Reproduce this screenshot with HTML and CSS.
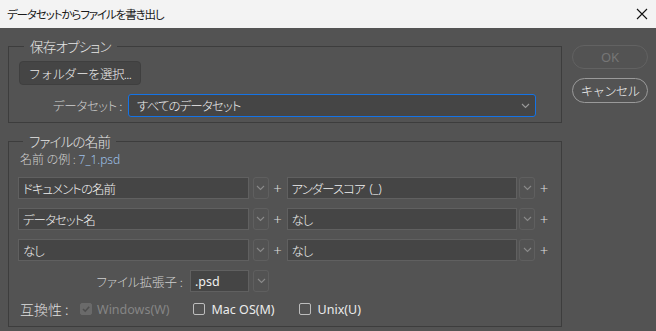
FILE: index.html
```html
<!DOCTYPE html>
<html lang="ja">
<head>
    <meta charset="UTF-8">
    <title>データセットからファイルを書き出し</title>
    <link rel="stylesheet" href="styles.css">
</head>
<body>
    <div class="titlebar">
        <span class="title">データセットからファイルを書き出し</span>
        <svg class="close" width="12" height="12" viewBox="0 0 12 12"><path d="M1 1 L11 11 M11 1 L1 11" stroke="#111" stroke-width="1.1" fill="none"/></svg>
    </div>
    <div class="dialog">
        <div class="main">
            <fieldset class="group">
                <legend>保存オプション</legend>
                <button class="btn-folder">フォルダーを選択...</button>
                <div class="row dataset-row">
                    <span class="label dataset-label">データセット :</span>
                    <div class="select active">
                        <span>すべてのデータセット</span>
                        <svg class="chev" width="9" height="6" viewBox="0 0 9 6"><path d="M1 1 L4.5 4.5 L8 1" stroke="#9a9a9a" stroke-width="1.1" fill="none"/></svg>
                    </div>
                </div>
            </fieldset>

            <fieldset class="group names">
                <legend>ファイルの名前</legend>
                <div class="example">名前 の例 : <span class="example-value">7_1.psd</span></div>

                <div class="row name-row">
                    <div class="field">ドキュメントの名前</div>
                    <div class="chev-btn"><svg width="9" height="6" viewBox="0 0 9 6"><path d="M1 1 L4.5 4.5 L8 1" stroke="#8a8a8a" stroke-width="1.1" fill="none"/></svg></div>
                    <span class="plus">+</span>
                    <div class="field second">アンダースコア<span class="paren">(_)</span></div>
                    <div class="chev-btn"><svg width="9" height="6" viewBox="0 0 9 6"><path d="M1 1 L4.5 4.5 L8 1" stroke="#8a8a8a" stroke-width="1.1" fill="none"/></svg></div>
                    <span class="plus">+</span>
                </div>
                <div class="row name-row">
                    <div class="field">データセット名</div>
                    <div class="chev-btn"><svg width="9" height="6" viewBox="0 0 9 6"><path d="M1 1 L4.5 4.5 L8 1" stroke="#8a8a8a" stroke-width="1.1" fill="none"/></svg></div>
                    <span class="plus">+</span>
                    <div class="field second">なし</div>
                    <div class="chev-btn"><svg width="9" height="6" viewBox="0 0 9 6"><path d="M1 1 L4.5 4.5 L8 1" stroke="#8a8a8a" stroke-width="1.1" fill="none"/></svg></div>
                    <span class="plus">+</span>
                </div>
                <div class="row name-row">
                    <div class="field">なし</div>
                    <div class="chev-btn"><svg width="9" height="6" viewBox="0 0 9 6"><path d="M1 1 L4.5 4.5 L8 1" stroke="#8a8a8a" stroke-width="1.1" fill="none"/></svg></div>
                    <span class="plus">+</span>
                    <div class="field second">なし</div>
                    <div class="chev-btn"><svg width="9" height="6" viewBox="0 0 9 6"><path d="M1 1 L4.5 4.5 L8 1" stroke="#8a8a8a" stroke-width="1.1" fill="none"/></svg></div>
                    <span class="plus">+</span>
                </div>

                <div class="row name-row ext-row">
                    <span class="label ext-label">ファイル拡張子 :</span>
                    <div class="field ext">.psd</div>
                    <div class="chev-btn"><svg width="9" height="6" viewBox="0 0 9 6"><path d="M1 1 L4.5 4.5 L8 1" stroke="#8a8a8a" stroke-width="1.1" fill="none"/></svg></div>
                </div>

                <div class="row compat-row">
                    <span class="compat-label">互換性 :</span>
                    <span class="check checked"><svg width="10" height="10" viewBox="0 0 10 10"><path d="M2 5 L4.2 7.2 L8.2 2.8" stroke="#4e4e4e" stroke-width="1.6" fill="none"/></svg></span>
                    <span class="opt disabled">Windows(W)</span>
                    <span class="check"></span>
                    <span class="opt">Mac OS(M)</span>
                    <span class="check"></span>
                    <span class="opt">Unix(U)</span>
                </div>
            </fieldset>
        </div>

        <div class="side">
            <button class="btn-round btn-ok">OK</button>
            <button class="btn-round btn-cancel">キャンセル</button>
        </div>
    </div>
</body>
</html>
```

FILE: styles.css
```css
* {
    box-sizing: border-box;
}
body {
    margin: 0;
    width: 656px;
    height: 331px;
    overflow: hidden;
    background-color: #535353;
    font-family: "Noto Sans CJK JP", "Noto Sans", sans-serif;
    font-feature-settings: "palt";
    font-weight: 300;
    color: #e8e8e8;
}
.titlebar {
    height: 28px;
    background-color: #f3f3f3;
    display: flex;
    align-items: center;
    justify-content: space-between;
    padding: 0 7px 0 7px;
}
.title {
    font-size: 11.5px;
    letter-spacing: -1.1px;
    color: #1a1a1a;
    font-weight: 400;
}
.close {
    margin-right: 1px;
}
.dialog {
    display: flex;
    padding: 9px 8px 0 8px;
}
.main {
    width: 554px;
    display: flex;
    flex-direction: column;
}
.group {
    margin: 0;
    border: 1px solid #3d3d3d;
    padding: 6px 10px 5px 10px;
    min-width: 0;
}
.group legend {
    font-size: 13.5px;
    line-height: 18px;
    letter-spacing: -0.8px;
    padding: 0 6px;
    margin-left: 5px;
    color: #e6e6e6;
}
.names {
    margin-top: 9px;
    padding: 0 8px 8px 9px;
}
.btn-folder {
    height: 24px;
    width: 122px;
    background-color: #454545;
    border: 1px solid #3f3f3f;
    border-radius: 4px;
    color: #ececec;
    font-family: inherit;
    font-weight: 300;
    font-size: 12.5px;
    letter-spacing: -0.6px;
    padding: 0;
    display: block;
}
.row {
    display: flex;
    align-items: center;
}
.dataset-row {
    margin-top: 9px;
}
.label {
    font-size: 12.5px;
    color: #cfcfcf;
    text-align: right;
}
.dataset-label {
    width: 103px;
    margin-right: 6px;
    letter-spacing: -0.4px;
}
.select {
    width: 408px;
    height: 23px;
    background-color: #454545;
    border: 1.5px solid #1473e6;
    border-radius: 3px;
    display: flex;
    align-items: center;
    justify-content: space-between;
    padding: 0 5px 0 8px;
    font-size: 12.5px;
    letter-spacing: -0.9px;
    color: #f0f0f0;
}
.example {
    font-size: 12px;
    line-height: 16px;
    color: #cdcdcd;
    padding-left: 2px;
    margin-top: 1px;
}
.example-value {
    color: #9ec0e8;
    font-family: "Noto Sans", sans-serif;
}
.name-row {
    height: 22px;
    margin-top: 9px;
}
.field {
    width: 231px;
    height: 22px;
    background-color: #454545;
    border: 1px solid #606060;
    display: flex;
    align-items: center;
    padding: 0 4px;
    font-size: 12.5px;
    letter-spacing: -1px;
    color: #f0f0f0;
    margin-right: 4px;
}
.field.second {
    margin-right: 2px;
}
.paren {
    margin-left: 5px;
    letter-spacing: 0;
    font-family: "Noto Sans", sans-serif;
}
.chev-btn {
    width: 16px;
    height: 22px;
    border: 1px solid #5f5f5f;
    border-radius: 3px;
    display: flex;
    align-items: center;
    justify-content: center;
}
.plus {
    width: 18px;
    text-align: center;
    font-family: "Noto Sans", sans-serif;
    font-size: 15px;
    color: #dcdcdc;
}
.ext-label {
    width: 165px;
    margin-right: 7px;
}
.field.ext {
    width: 59px;
    letter-spacing: 0;
    font-family: "Noto Sans", sans-serif;
    font-weight: 400;
}
.compat-row {
    height: 18px;
    margin-top: 8px;
    font-size: 13px;
}
.compat-label {
    margin-left: 2px;
    width: 60px;
    font-size: 14px;
    color: #dedede;
}
.check {
    width: 12px;
    height: 12px;
    border: 1px solid #bdbdbd;
    border-radius: 2px;
    display: flex;
    align-items: center;
    justify-content: center;
    margin-right: 7px;
}
.check.checked {
    background-color: #6a6a6a;
    border-color: #6a6a6a;
    margin-right: 5px;
}
.opt {
    font-family: "Noto Sans", sans-serif;
    font-weight: 400;
    font-size: 12.5px;
    color: #ececec;
    margin-right: 24px;
}
.opt.disabled {
    color: #858585;
    margin-right: 23px;
}
.side {
    margin-left: 10px;
    padding-top: 8px;
    width: 76px;
    display: flex;
    flex-direction: column;
}
.btn-round {
    width: 76px;
    background: transparent;
    border-radius: 13px;
    font-family: inherit;
    font-weight: 300;
    padding: 0;
}
.btn-ok {
    height: 24px;
    border: 1px solid #626262;
    color: #767676;
    font-family: "Noto Sans", sans-serif;
    font-weight: 400;
    font-size: 13px;
}
.btn-cancel {
    height: 25px;
    margin-top: 9px;
    border: 1.5px solid #9a9a9a;
    color: #f2f2f2;
    font-size: 12.5px;
    letter-spacing: -0.8px;
}
```
